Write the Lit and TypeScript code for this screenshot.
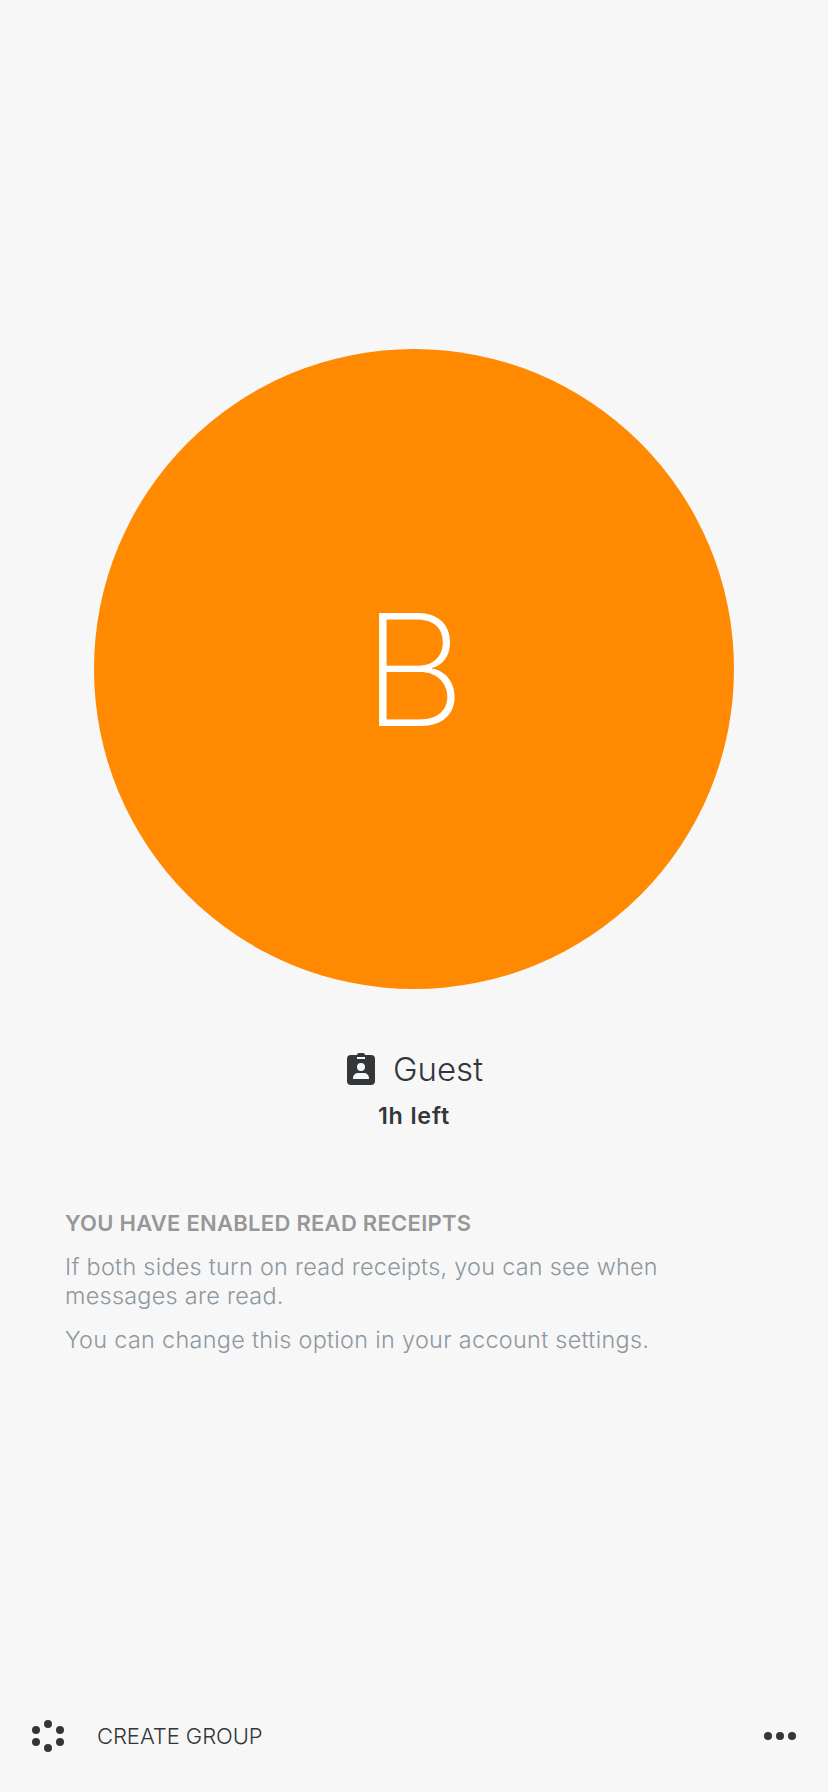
import { LitElement, html, css } from "lit";
import { customElement } from "lit/decorators.js";

@customElement("app-root")
export class AppRoot extends LitElement {
  static styles = css`
    :host {
      display: flex;
      flex-direction: column;
      box-sizing: border-box;
      width: 100%;
      height: 100vh;
      padding-top: 349px;
      background: #f7f7f7;
      color: #33373a;
      font-family: Inter, "Liberation Sans", sans-serif;
      white-space: nowrap;
      overflow: hidden;
    }
    .avatar {
      display: flex;
      align-items: center;
      justify-content: center;
      align-self: center;
      width: 640px;
      height: 640px;
      border-radius: 50%;
      background: #ff8900;
      color: #fff;
      font-size: 155.5px;
      font-weight: 200;
      line-height: 190px;
    }
    .initial {
      padding-top: 2px;
      transform: scaleX(1.034);
    }
    .role {
      display: flex;
      align-items: center;
      padding: 60px 0 0 347px;
      gap: 18px;
      font-size: 33px;
      font-weight: 300;
      line-height: 40px;
    }
    .time {
      margin-top: 12px;
      text-align: center;
      font-size: 23.3px;
      font-weight: 600;
      line-height: 29px;
      letter-spacing: 0.85px;
    }
    .receipts {
      padding: 79px 66px 0 65px;
      color: #8d989f;
      font-size: 23.4px;
      font-weight: 300;
      line-height: 29px;
      letter-spacing: 0.28px;
    }
    h2 {
      margin: 0 0 14px;
      color: #979797;
      font-size: 22px;
      font-weight: 600;
      line-height: 29px;
      letter-spacing: 0.27px;
    }
    p {
      margin: 0 0 15px;
    }
    .note {
      letter-spacing: 0.32px;
    }
    footer {
      display: flex;
      align-items: center;
      height: 112px;
      margin-top: auto;
      padding: 0 32px;
      font-size: 22px;
      font-weight: 300;
    }
    .create {
      flex: 1;
      margin-left: 33px;
      letter-spacing: -0.06px;
    }
    svg {
      display: block;
      fill: currentColor;
    }
  `;

  render() {
    return html`
      <div class="avatar"><span class="initial">B</span></div>
      <div class="role">
        <svg width="28" height="32" viewBox="0 0 28 32">
          <path
            fill-rule="evenodd"
            d="M4 2h6a2 2 0 0 1 2-2h4a2 2 0 0 1 2 2h6a4 4 0 0 1 4 4v22a4 4 0 0 1-4 4H4a4 4 0 0 1-4-4V6a4 4 0 0 1 4-4zM10 4v2h8V4zM14 10a4 4 0 1 0 0 8 4 4 0 0 0 0-8zM6 26h16v-1a5 5 0 0 0-5-5h-6a5 5 0 0 0-5 5z"
          />
        </svg>
        <span>Guest</span>
      </div>
      <div class="time">1h left</div>
      <section class="receipts">
        <h2>YOU HAVE ENABLED READ RECEIPTS</h2>
        <p>If both sides turn on read receipts, you can see when<br />messages are read.</p>
        <p class="note">You can change this option in your account settings.</p>
      </section>
      <footer>
        <svg width="32" height="32" viewBox="0 0 32 32">
          <circle cx="16" cy="4" r="4" />
          <circle cx="4" cy="10" r="4" />
          <circle cx="28" cy="10" r="4" />
          <circle cx="4" cy="22" r="4" />
          <circle cx="28" cy="22" r="4" />
          <circle cx="16" cy="28" r="4" />
        </svg>
        <span class="create">CREATE GROUP</span>
        <svg width="32" height="8" viewBox="0 0 32 8">
          <circle cx="4" cy="4" r="4" />
          <circle cx="16" cy="4" r="4" />
          <circle cx="28" cy="4" r="4" />
        </svg>
      </footer>
    `;
  }
}
